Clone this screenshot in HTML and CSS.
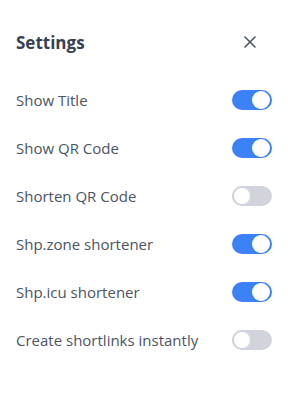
FILE: index.html
```html
<!DOCTYPE html>
<html>
<head>
<meta charset="utf-8">
<link rel="stylesheet" href="styles.css">
</head>
<body>
<div class="panel">
  <div class="header">
    <h1 class="title">Settings</h1>
    <button class="close" aria-label="Close">
      <svg width="12" height="12" viewBox="0 0 12 12"><path d="M1 1L11 11M11 1L1 11" stroke="#4b5563" stroke-width="1.6" stroke-linecap="round"/></svg>
    </button>
  </div>
  <div class="list">
    <div class="row"><span class="label">Show Title</span><span class="toggle on"><span class="knob"></span></span></div>
    <div class="row"><span class="label">Show QR Code</span><span class="toggle on"><span class="knob"></span></span></div>
    <div class="row"><span class="label">Shorten QR Code</span><span class="toggle"><span class="knob"></span></span></div>
    <div class="row"><span class="label">Shp.zone shortener</span><span class="toggle on"><span class="knob"></span></span></div>
    <div class="row"><span class="label">Shp.icu shortener</span><span class="toggle on"><span class="knob"></span></span></div>
    <div class="row"><span class="label">Create shortlinks instantly</span><span class="toggle"><span class="knob"></span></span></div>
  </div>
</div>
</body>
</html>
```

FILE: styles.css
```css
html, body {
  margin: 0;
  padding: 0;
  background: #ffffff;
}
body {
  font-family: "Open Sans", "Noto Sans", sans-serif;
  color: #4b5563;
}
.panel {
  padding: 24px 16px;
}
.header {
  display: flex;
  align-items: center;
  justify-content: space-between;
  height: 36px;
}
.title {
  margin: 0;
  font-size: 17px;
  font-weight: 700;
  color: #374151;
}
.close {
  width: 24px;
  height: 24px;
  margin-right: 10px;
  padding: 0;
  border: 0;
  background: transparent;
  display: flex;
  align-items: center;
  justify-content: center;
}
.list {
  margin-top: 16px;
  display: flex;
  flex-direction: column;
}
.row {
  height: 48px;
  display: flex;
  align-items: center;
  justify-content: space-between;
}
.label {
  font-size: 15px;
}
.toggle {
  width: 40px;
  height: 20px;
  border-radius: 10px;
  background: #d1d5db;
  box-sizing: border-box;
  display: flex;
  align-items: center;
  justify-content: flex-start;
}
.toggle.on {
  background: #3b82f6;
  justify-content: flex-end;
  padding: 1px 2px;
}
.knob {
  width: 18px;
  height: 18px;
  border-radius: 50%;
  background: #ffffff;
  box-sizing: border-box;
}
.toggle:not(.on) .knob {
  width: 20px;
  height: 20px;
  border: 2px solid #d1d5db;
}
```
